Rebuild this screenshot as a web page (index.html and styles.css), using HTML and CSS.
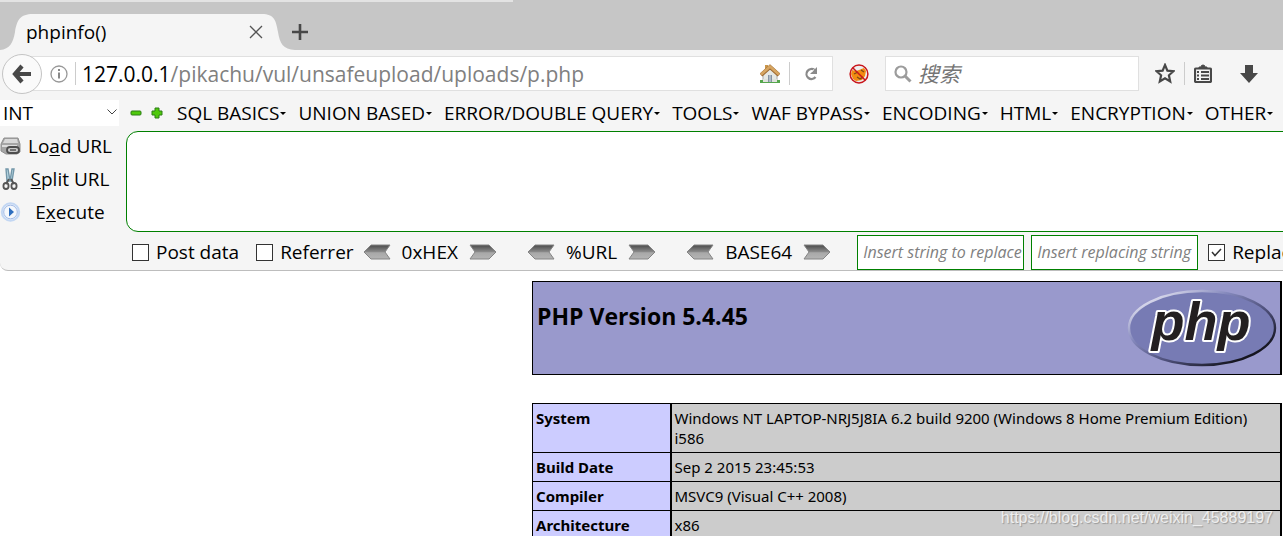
FILE: index.html
```html
<!DOCTYPE html>
<html lang="zh-CN">
<head>
<meta charset="utf-8">
<title>phpinfo()</title>
<link rel="stylesheet" href="styles.css">
</head>
<body>
<svg class="defs" aria-hidden="true">
  <defs>
    <linearGradient id="steel" x1="0" y1="0" x2="0" y2="1">
      <stop offset="0" stop-color="#4a4a4a"/><stop offset=".5" stop-color="#8c8c8c"/><stop offset=".55" stop-color="#a8a8a8"/><stop offset="1" stop-color="#b4b4b4"/>
    </linearGradient>
    <linearGradient id="rim" x1="0" y1="0" x2="1" y2="1">
      <stop offset=".1" stop-color="#e4e4f2"/><stop offset=".35" stop-color="#8488bc"/><stop offset=".6" stop-color="#4c4e78"/><stop offset=".85" stop-color="#15151f"/>
    </linearGradient>
    <symbol id="arrow-left" viewBox="0 0 28 16"><path d="M1 8 8 1H27L22 8 27 15H8Z" fill="url(#steel)" stroke="#858585"/></symbol>
    <symbol id="arrow-right" viewBox="0 0 28 16"><path d="M27 8 20 1H1L6 8 1 15H20Z" fill="url(#steel)" stroke="#858585"/></symbol>
  </defs>
</svg>

<header class="tabs">
  <div class="tab">
    <svg class="tab-shape" viewBox="0 0 295 36" preserveAspectRatio="none" aria-hidden="true"><path d="M0 36C10 35 13 29 15 18C17 6 20 0 33 0H262C274 0 276 6 278 18C280 30 283 35 295 36Z" fill="#f5f5f5"/></svg>
    <span class="tab-title">phpinfo()</span>
    <button class="icon tab-close" aria-label="Close tab"><svg width="14" height="14" viewBox="0 0 14 14"><path d="M1 1 13 13M13 1 1 13" stroke="#555" stroke-width="1.3"/></svg></button>
  </div>
  <button class="icon" aria-label="New tab"><svg width="16" height="16" viewBox="0 0 16 16"><path d="M8 0V16M0 8H16" stroke="#484848" stroke-width="2.6"/></svg></button>
</header>

<nav class="navbar">
  <button class="icon back" aria-label="Back"><svg width="20" height="20" viewBox="0 0 20 20"><path d="M10 2 3 10 10 18M3 10H19" fill="none" stroke="#484848" stroke-width="4.2"/></svg></button>
  <div class="address">
    <svg width="18" height="18" viewBox="0 0 18 18" aria-hidden="true"><circle cx="9" cy="9" r="8" fill="none" stroke="#989898" stroke-width="1.3"/><path d="M9 4V6M9 7.500V13.500" stroke="#888" stroke-width="2"/></svg>
    <span class="rule"></span>
    <p class="url"><span class="host">127.0.0.1</span>/pikachu/vul/unsafeupload/uploads/p.php</p>
    <button class="icon" aria-label="Home"><svg width="20" height="20" viewBox="0 0 20 20"><path d="M3 10 10 4 17 10V18H3Z" fill="#e6e8e4" stroke="#aaa"/><path d="M0 16H20V19H0Z" fill="#55a64d"/><path d="M3 15H17V18H3Z" fill="#dfe2dc"/><path d="M8 11H12V18H8Z" fill="#8593a3"/><path d="M10 11V18" stroke="#d9e0e6"/><path d="M5 1H8V6H5Z" fill="#c9964b"/><path d="M1 11 10 3 19 11" fill="none" stroke="#9c6830" stroke-width="4"/><path d="M1 10.500 10 2.500 19 10.500" fill="none" stroke="#d6a561" stroke-width="2.800"/></svg></button>
    <span class="rule reload-rule"></span>
    <button class="icon" aria-label="Reload"><svg width="14" height="16" viewBox="0 0 14 16"><path d="M10.500 4A5 5 0 1 0 11.500 11" fill="none" stroke="#8a8a8a" stroke-width="2.300"/><path d="M13 1V8H6Z" fill="#8a8a8a"/><path d="M9.500 3.500 8.500 5.500" stroke="#fff" stroke-width="1"/></svg></button>
  </div>
  <button class="icon" aria-label="Proxy disabled"><svg width="20" height="20" viewBox="0 0 20 20"><circle cx="10" cy="10" r="8.800" fill="#eee"/><path d="M3 6 7 7 10 6 15 4 17 7 16 12 13 16 7 17 4 15 2 10Z" fill="#f28a11"/><path d="M5 10 9 8M8 13 11 15 14 13M12 6 15 8" fill="none" stroke="#7b4a16" stroke-width="1.300"/><circle cx="10" cy="10" r="8.900" fill="none" stroke="#c9151b" stroke-width="1.500"/><path d="M3.700 3.700 16.300 16.300" stroke="#c9151b" stroke-width="1.500"/></svg></button>
  <label class="search">
    <svg width="18" height="18" viewBox="0 0 18 18" aria-hidden="true"><circle cx="7" cy="7" r="5.500" fill="none" stroke="#9c9c9c" stroke-width="2.200"/><path d="M11 11 16.500 16.500" stroke="#9c9c9c" stroke-width="3"/></svg>
    <input type="text" placeholder="搜索" aria-label="搜索">
  </label>
  <div class="actions">
    <button class="icon" aria-label="Bookmark"><svg width="20" height="21" viewBox="0 0 20 21"><path d="M10 2 12.400 7.600 18.500 8.200 13.900 12.300 15.200 18.500 10 15.300 4.800 18.500 6.100 12.300 1.500 8.200 7.600 7.600Z" fill="none" stroke="#484848" stroke-width="2.200"/></svg></button>
    <span class="rule"></span>
    <button class="icon" aria-label="Library"><svg width="18" height="19" viewBox="0 0 18 19"><path d="M5 4V3H7A2 2 0 0 1 11 3H13V4Z" fill="#484848" stroke="#484848"/><rect x="1" y="4.500" width="16" height="13.500" rx="1" fill="#f5f5f5" stroke="#484848" stroke-width="2.200"/><path d="M3 8H5M3 11.500H5M3 15H5M7 8H15M7 11.500H15M7 15H15" stroke="#484848" stroke-width="1.800"/></svg></button>
    <button class="icon download" aria-label="Downloads"><svg width="18" height="18" viewBox="0 0 18 18"><path d="M5 0H13V8H18L9 18 0 8H5Z" fill="#484848"/></svg></button>
  </div>
</nav>

<section class="hackbar">
  <aside class="side">
    <select class="mode" aria-label="Type"><option>INT</option></select>
    <button class="tool"><svg width="21" height="20" viewBox="0 0 21 20" aria-hidden="true"><path d="M4 2H18L20 8V16L17 18H6L1 15V8Z" fill="#a5a5a5" stroke="#8e8e8e"/><path d="M5 3H17L18 7H3Z" fill="#d8d8d8"/><path d="M2 9H17V11H2Z" fill="#ddd"/><rect x="7" y="11" width="12" height="6" rx="3" fill="#c8c8c8" stroke="#4d4d4d" stroke-width="1.800"/><path d="M10 14H16" stroke="#555" stroke-width="1.500"/></svg><span>Lo<u>a</u>d URL</span></button>
    <button class="tool"><svg width="21" height="22" viewBox="0 0 21 22" aria-hidden="true"><path d="M6 1 8 1 10 13H7ZM14 1 12 1 10 13H12Z" fill="#b8d7e4" stroke="#7397a9" stroke-width="1.400"/><path d="M9 11 6 16M11 11 14 16" stroke="#555" stroke-width="2"/><ellipse cx="6" cy="18" rx="2.600" ry="3" fill="none" stroke="#555" stroke-width="1.800"/><ellipse cx="14" cy="18" rx="2.600" ry="3" fill="none" stroke="#555" stroke-width="1.800"/></svg><span><u>S</u>plit URL</span></button>
    <button class="tool"><svg width="21" height="20" viewBox="0 0 21 20" aria-hidden="true"><circle cx="10.500" cy="10" r="8.700" fill="#e9f0fa" stroke="#c3d7f3" stroke-width="2"/><circle cx="10.500" cy="10" r="6.800" fill="#f5f8fc" stroke="#a3bbe6"/><path d="M9 5.500 14 10 9 14.500Z" fill="#2f6fbf"/></svg><span>E<u>x</u>ecute</span></button>
  </aside>
  <div class="main">
    <div class="menus">
      <button class="icon" aria-label="Remove"><svg width="12" height="12" viewBox="0 0 12 12"><rect x="1" y="4" width="10" height="4" rx="1" fill="#4fc90b" stroke="#2d7d16"/></svg></button>
      <button class="icon plus" aria-label="Add"><svg width="12" height="12" viewBox="0 0 12 12"><path d="M4 1H8V4H11V8H8V11H4V8H1V4H4Z" fill="#4fc90b" stroke="#2d7d16" stroke-linejoin="round"/></svg></button>
      <button class="menu">SQL BASICS</button>
      <button class="menu">UNION BASED</button>
      <button class="menu">ERROR/DOUBLE QUERY</button>
      <button class="menu">TOOLS</button>
      <button class="menu">WAF BYPASS</button>
      <button class="menu">ENCODING</button>
      <button class="menu">HTML</button>
      <button class="menu">ENCRYPTION</button>
      <button class="menu">OTHER</button>
    </div>
    <textarea class="payload" aria-label="URL"></textarea>
    <div class="options">
      <label class="check"><input type="checkbox">Post data</label>
      <label class="check referrer"><input type="checkbox">Referrer</label>
      <div class="codec hex"><button class="icon" aria-label="Decode hex"><svg width="28" height="16"><use href="#arrow-left"/></svg></button><span>0xHEX</span><button class="icon" aria-label="Encode hex"><svg width="28" height="16"><use href="#arrow-right"/></svg></button></div>
      <div class="codec"><button class="icon" aria-label="Decode URL"><svg width="28" height="16"><use href="#arrow-left"/></svg></button><span>%URL</span><button class="icon" aria-label="Encode URL"><svg width="28" height="16"><use href="#arrow-right"/></svg></button></div>
      <div class="codec"><button class="icon" aria-label="Decode base64"><svg width="28" height="16"><use href="#arrow-left"/></svg></button><span>BASE64</span><button class="icon" aria-label="Encode base64"><svg width="28" height="16"><use href="#arrow-right"/></svg></button></div>
      <input class="replace first" type="text" placeholder="Insert string to replace" aria-label="Insert string to replace">
      <input class="replace" type="text" placeholder="Insert replacing string" aria-label="Insert replacing string">
      <label class="check all"><input type="checkbox" checked>Replace All</label>
    </div>
  </div>
</section>

<main class="page">
  <div class="banner">
    <h1>PHP Version 5.4.45</h1>
    <svg width="150" height="80" viewBox="0 0 150 80" role="img" aria-label="PHP logo">
      <ellipse cx="75" cy="40" rx="73" ry="37" fill="#777bb4" stroke="url(#rim)" stroke-width="2.400"/>
      <text x="74" y="52" class="logo-text" text-anchor="middle">php</text>
    </svg>
  </div>
  <table class="info">
    <tr><th scope="row">System</th><td>Windows NT LAPTOP-NRJ5J8IA 6.2 build 9200 (Windows 8 Home Premium Edition) i586</td></tr>
    <tr><th scope="row">Build Date</th><td>Sep 2 2015 23:45:53</td></tr>
    <tr><th scope="row">Compiler</th><td>MSVC9 (Visual C++ 2008)</td></tr>
    <tr><th scope="row">Architecture</th><td>x86</td></tr>
  </table>
</main>
<div class="watermark">https://blog.csdn.net/weixin_45889197</div>
</body>
</html>
```
FILE: styles.css
```css
* { box-sizing: border-box; }

body {
  margin: 0;
  height: 100vh;
  overflow: hidden;
  position: relative;
  background: #fff;
  color: #000;
  font: 19px/26px "Open Sans", "Noto Sans CJK SC", sans-serif;
}

button, input, select, textarea { font: inherit; color: inherit; }
button { border: 0; padding: 0; background: none; white-space: nowrap; }
svg { display: block; flex: none; }
.defs { position: absolute; width: 0; height: 0; }
.icon { display: flex; flex: none; align-items: center; justify-content: center; }
.rule { flex: none; width: 1px; height: 23px; background: #ccc; }

.tabs {
  display: flex;
  align-items: center;
  height: 50px;
  padding-top: 14px;
  background: linear-gradient(#e3e3e3, #e3e3e3) 0 0 / 40% 2px no-repeat #c6c6c6;
}
.tab { position: relative; display: flex; align-items: center; justify-content: space-between; width: 295px; height: 36px; padding: 0 32px 0 26px; margin-right: -3px; }
.tab-shape { position: absolute; inset: 0; width: 100%; height: 100%; }
.tab-title, .tab-close { position: relative; }

.navbar { display: flex; align-items: center; height: 47px; background: #f5f5f5; padding-right: 25px; }
.back { position: relative; z-index: 1; width: 40px; height: 40px; margin-left: 2px; border: 1px solid #c4c4c4; border-radius: 50%; background: #fafafa; }
.address { display: flex; align-items: center; flex: 1; height: 35px; margin: 0 16px 0 -20px; padding: 0 14px 0 27px; border: 1px solid #e0e0e0; background: #fff; }
.address .rule { margin: 0 6px 0 7px; }
.url { flex: 1; margin: 0; font-size: 21px; color: #808080; white-space: nowrap; }
.host { color: #000; }
.address .reload-rule { margin: 0 14px 0 9px; }
.search { display: flex; align-items: center; gap: 6px; width: 254px; height: 35px; margin: 0 16px; padding: 0 8px; border: 1px solid #e0e0e0; background: #fff; }
.search input { flex: 1; min-width: 0; padding: 0; border: 0; outline: 0; background: none; font-size: 21px; font-style: italic; }
.search input::placeholder { color: #757575; opacity: 1; }
.actions { display: flex; align-items: center; gap: 9px; }
.actions .download { margin-left: 19px; }

.hackbar { display: flex; background: #f5f5f5; border-bottom: 1px solid #bdbdbd; border-bottom-left-radius: 8px; }
.side { display: flex; flex: none; flex-direction: column; width: 126px; padding-top: 3px; }
.mode {
  appearance: none;
  width: 119px;
  height: 26px;
  margin-bottom: 3px;
  padding: 0 3px;
  border: 0;
  background: #fff url("data:image/svg+xml,%3Csvg xmlns='http://www.w3.org/2000/svg' width='10' height='6'%3E%3Cpath d='M.5.5 5 5 9.500.5' fill='none' stroke='%23444'/%3E%3C/svg%3E") right 2px top 9px no-repeat;
}
.tool { display: flex; align-items: center; width: 119px; height: 33px; }
.tool span { flex: 1; text-align: center; }
.tool u { text-decoration-thickness: 1px; text-underline-offset: 2px; }

.main { flex: 1; min-width: 0; overflow: hidden; }
.menus { display: flex; align-items: center; height: 34px; padding: 0 0 2px 4px; white-space: nowrap; }
.plus { margin: 0 14px 0 9px; }
.menu { display: flex; align-items: center; flex: none; margin-right: 12px; }
.menu::after { content: ""; margin-left: 1px; border: 3px solid transparent; border-top-color: #000; border-bottom: 0; }
.payload { display: block; width: calc(100% + 12px); height: 101px; border: 1px solid #008000; border-radius: 12px; background: #fff; resize: none; outline: 0; }
.options { display: flex; align-items: center; height: 38px; padding: 2px 0 0 6px; white-space: nowrap; }
.options > * { flex: none; }
.check { display: flex; align-items: center; gap: 7px; }
.check input { appearance: none; width: 17px; height: 17px; margin: 0; border: 1px solid #333; background: #fff; }
.check input:checked { background: #fff url("data:image/svg+xml,%3Csvg xmlns='http://www.w3.org/2000/svg' width='15' height='15'%3E%3Cpath d='M3 7 6 10.500 12 4' fill='none' stroke='%23333' stroke-width='1.500'/%3E%3C/svg%3E") center no-repeat; }
.referrer { margin-left: 17px; }
.codec { display: flex; align-items: center; gap: 11px; margin-right: 30px; }
.hex { margin-left: 9px; }
.replace { width: 167px; height: 35px; margin-right: 7px; padding: 0 1px 0 5px; border: 1px solid #008000; outline: 0; background: #fff; font-size: 16px; font-style: italic; }
.first { margin-left: -4px; }
.replace::placeholder { color: #808080; opacity: 1; }
.all { margin-left: 3px; }

.page { width: 750px; margin: 10px 1px 0 auto; }
.banner { display: flex; justify-content: space-between; height: 94px; padding: 6px 3px 0 4px; border: 1px solid #000; border-right-width: 2px; background: #9999cc; }
.banner h1 { margin: 12px 0 0; font-size: 23px; line-height: 32px; }
.logo-text { font: italic bold 54px "Liberation Sans", sans-serif; fill: #231f20; stroke: #fff; stroke-width: 4px; paint-order: stroke; stroke-linejoin: round; }
.info { width: 100%; margin-top: 28px; border-collapse: collapse; font: 15px/20px "Noto Sans", sans-serif; }
.info th, .info td { padding: 4px 4px 4px 3px; border: 1px solid #000; text-align: left; vertical-align: top; }
.info th { width: 138px; border-right-width: 2px; background: #ccccff; }
.info td { border-right-width: 2px; background: #cccccc; }
.watermark { position: absolute; right: 10px; bottom: 6px; font: 16px/24px "Liberation Sans", sans-serif; color: #eee; text-shadow: 1px 1px 1px #999; }
```
